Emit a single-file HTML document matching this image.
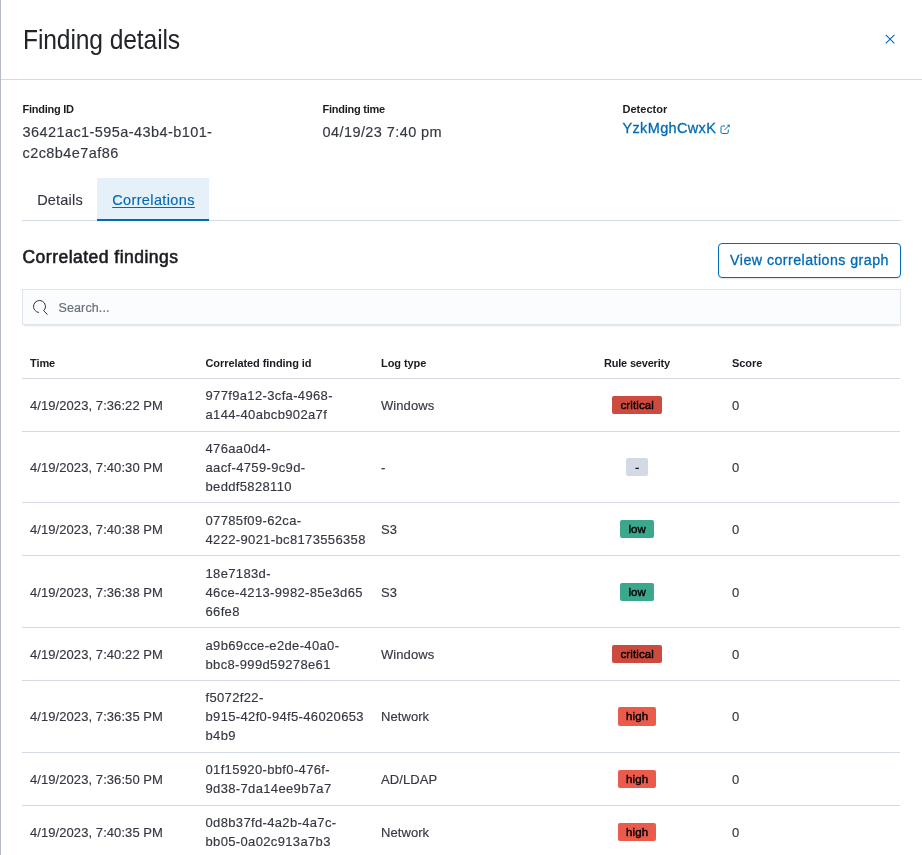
<!DOCTYPE html>
<html lang="en">
<head>
<meta charset="utf-8">
<title>Finding details</title>
<style>
*{box-sizing:border-box;margin:0;padding:0}
html,body{width:922px;height:855px;overflow:hidden;background:#fff}
body{font-family:"Liberation Sans",sans-serif;color:#343741;position:relative}
.flyout{position:absolute;left:0;top:0;width:922px;height:855px;overflow:hidden;will-change:transform}
.edge{position:absolute;left:0;top:0;width:1px;height:855px;background:#b4bac6}
.hdr{position:absolute;left:1px;top:0;width:921px;height:80px;border-bottom:1px solid #d3dae6}
.hdr h2{position:absolute;left:21.5px;top:24.8px;font-size:26.75px;line-height:30px;font-weight:400;color:#22242a;white-space:nowrap;letter-spacing:-0.12px;transform-origin:0 0;transform:scaleX(0.92)}
.close{position:absolute;left:883.2px;top:33.1px;width:12px;height:12px}
.lbl{position:absolute;font-size:11px;line-height:14px;font-weight:700;color:#1a1c21;white-space:nowrap;letter-spacing:-0.25px;margin-left:0.5px}
.val{-webkit-text-stroke:0.15px #343741;position:absolute;font-size:14.5px;line-height:21px;color:#343741;white-space:nowrap;letter-spacing:0.42px;margin-left:0.5px}
.link{color:#006bb4}
.tabs{position:absolute;left:22px;top:178px;width:879px;height:43px;border-bottom:1px solid #d3dae6}
.tab{-webkit-text-stroke:0.15px;position:absolute;top:0;height:43px;font-size:14.5px;line-height:45px;color:#343741;text-align:center;white-space:nowrap}
.tab.sel{background:#e6f0f8;color:#006bb4;border-bottom:2px solid #006bb4}
.tab.sel span{text-decoration:underline;text-underline-offset:2px}
h3.ct{position:absolute;left:22.5px;top:246px;font-size:17.5px;line-height:22px;font-weight:400;-webkit-text-stroke:0.58px #1a1c21;color:#1a1c21;white-space:nowrap;letter-spacing:0.48px}
.btn{position:absolute;left:718px;top:243px;width:183px;height:35px;border:1px solid #006bb4;border-radius:4px;color:#006bb4;font-size:14.25px;line-height:33px;text-align:center;white-space:nowrap;background:#fff;box-shadow:0 2px 2px -1px rgba(152,162,179,.3);letter-spacing:0.44px;-webkit-text-stroke:0.3px #006bb4}
.search{position:absolute;left:22px;top:289px;width:879px;height:36px;background:#fbfcfd;border:1px solid #e1e6ee;box-shadow:0 1px 1px -1px rgba(152,162,179,.3),0 3px 2px -2px rgba(152,162,179,.3)}
.search svg{position:absolute;left:9px;top:8.600px}
.search span{position:absolute;left:35.5px;top:0.5px;line-height:34px;font-size:12.5px;color:#69707d;letter-spacing:0.12px;-webkit-text-stroke:0.2px #69707d}
table{position:absolute;left:22px;top:345px;width:878px;border-collapse:collapse;table-layout:fixed}
th{height:33px;text-align:left;font-size:11px;font-weight:700;color:#1a1c21;padding:3px 8px 0;border-bottom:1px solid #d3dae6;vertical-align:middle;white-space:nowrap;letter-spacing:-0.08px}
td{-webkit-text-stroke:0.15px #343741;letter-spacing:0.07px;font-size:13px;line-height:19px;color:#343741;padding:0 8px;border-bottom:1px solid #d3dae6;vertical-align:middle}
tr.r2 td{height:53px}
tr.r2 td:not(.id):not(.sev){padding-top:1px}
tr.r3 td{height:72px}
tr.r3a td{height:71px}
tr.r3a td:not(.sev){padding-top:1px}
td.p2{padding-top:2px}
td.id{letter-spacing:0.35px;white-space:nowrap}
td.d1{padding-top:2px}
td.sev{text-align:center;padding-right:53.6px}
.badge{display:inline-block;position:relative;top:-1px;height:18px;line-height:18px;padding:0 8px;font-size:11.5px;font-weight:400;-webkit-text-stroke:0.4px #000;color:#000;border-radius:2px;vertical-align:middle;letter-spacing:0.12px}
tr.r2 .badge,tr.r3a .badge{top:0}
.crit{background:#cd4a3e}
.high{background:#ea5b4c}
.low{background:#3ba88e}
.none{background:#d3dae6;padding:0 9.25px}
</style>
</head>
<body>
<div class="flyout">
  <div class="edge"></div>
  <div class="hdr">
    <h2>Finding details</h2>
    <svg class="close" viewBox="0 0 12 12"><path d="M1.8 1.8 L10.4 10.4 M10.4 1.8 L1.8 10.4" stroke="#006bb4" stroke-width="1.1" fill="none" stroke-linecap="butt"/></svg>
  </div>

  <div class="lbl" style="left:22px;top:102px">Finding ID</div>
  <div class="val" style="left:22px;top:122px">36421ac1-595a-43b4-b101-<br>c2c8b4e7af86</div>

  <div class="lbl" style="left:322px;top:102px">Finding time</div>
  <div class="val" style="left:322px;top:122px">04/19/23 7:40 pm</div>

  <div class="lbl" style="left:622px;top:102px;letter-spacing:0.02px">Detector</div>
  <div class="val link" style="left:622px;top:118px;letter-spacing:0.35px;-webkit-text-stroke:0.3px #006bb4">YzkMghCwxK</div>
  <svg style="position:absolute;left:719.5px;top:123.5px" width="10.5" height="10.5" viewBox="0 0 16 16"><path d="M12.6 9v3.4c0 1.2-.9 2.1-2.1 2.1H3.6c-1.2 0-2.1-.9-2.1-2.1V5.1C1.500 3.900 2.400 3 3.600 3H7" stroke="#006bb4" stroke-width="1.5" fill="none" stroke-linecap="round" stroke-linejoin="round"/><path d="M7.300 8.700 13 3" stroke="#006bb4" stroke-width="1.4" fill="none" stroke-linecap="round"/><path d="M10.500 1.200h4.300v4.300z" fill="#006bb4"/></svg>

  <div class="tabs">
    <div class="tab" style="left:0.5px;width:75px;letter-spacing:0.2px">Details</div>
    <div class="tab sel" style="left:75px;width:112px;letter-spacing:0.37px"><span style="position:relative;left:0.5px">Correlations</span></div>
  </div>

  <h3 class="ct">Correlated findings</h3>
  <div class="btn">View correlations graph</div>

  <div class="search">
    <svg width="16" height="16" viewBox="0 0 16 16"><path d="M12.1 11.360A6 6 0 1 0 6.980 13.480" stroke="#343741" stroke-width="1" fill="none"/><path d="M11.700 11.700 15.200 15.400" stroke="#343741" stroke-width="1" stroke-linecap="round"/></svg>
    <span>Search...</span>
  </div>

  <table>
    <colgroup><col style="width:175.5px"><col style="width:175.5px"><col style="width:223px"><col style="width:128px"><col style="width:176px"></colgroup>
    <thead>
      <tr><th>Time</th><th>Correlated finding id</th><th>Log type</th><th style="letter-spacing:-0.2px">Rule severity</th><th>Score</th></tr>
    </thead>
    <tbody>
      <tr class="r2"><td>4/19/2023, 7:36:22 PM</td><td class="id">977f9a12-3cfa-4968-<br>a144-40abcb902a7f</td><td>Windows</td><td class="sev"><span class="badge crit">critical</span></td><td>0</td></tr>
      <tr class="r3 r3a"><td>4/19/2023, 7:40:30 PM</td><td class="id">476aa0d4-<br>aacf-4759-9c9d-<br>beddf5828110</td><td>-</td><td class="sev"><span class="badge none">-</span></td><td>0</td></tr>
      <tr class="r2"><td>4/19/2023, 7:40:38 PM</td><td class="id d1">07785f09-62ca-<br>4222-9021-bc8173556358</td><td>S3</td><td class="sev"><span class="badge low">low</span></td><td>0</td></tr>
      <tr class="r3"><td class="p2">4/19/2023, 7:36:38 PM</td><td class="id d1">18e7183d-<br>46ce-4213-9982-85e3d65<br>66fe8</td><td class="p2">S3</td><td class="sev"><span class="badge low" style="top:0">low</span></td><td class="p2">0</td></tr>
      <tr class="r2"><td>4/19/2023, 7:40:22 PM</td><td class="id d1">a9b69cce-e2de-40a0-<br>bbc8-999d59278e61</td><td>Windows</td><td class="sev"><span class="badge crit">critical</span></td><td>0</td></tr>
      <tr class="r3"><td>4/19/2023, 7:36:35 PM</td><td class="id">f5072f22-<br>b915-42f0-94f5-46020653<br>b4b9</td><td>Network</td><td class="sev"><span class="badge high" style="height:19px;top:-0.5px">high</span></td><td>0</td></tr>
      <tr class="r2"><td>4/19/2023, 7:36:50 PM</td><td class="id">01f15920-bbf0-476f-<br>9d38-7da14ee9b7a7</td><td>AD/LDAP</td><td class="sev"><span class="badge high">high</span></td><td>0</td></tr>
      <tr class="r2"><td>4/19/2023, 7:40:35 PM</td><td class="id">0d8b37fd-4a2b-4a7c-<br>bb05-0a02c913a7b3</td><td>Network</td><td class="sev"><span class="badge high">high</span></td><td>0</td></tr>
    </tbody>
  </table>
</div>
</body>
</html>
